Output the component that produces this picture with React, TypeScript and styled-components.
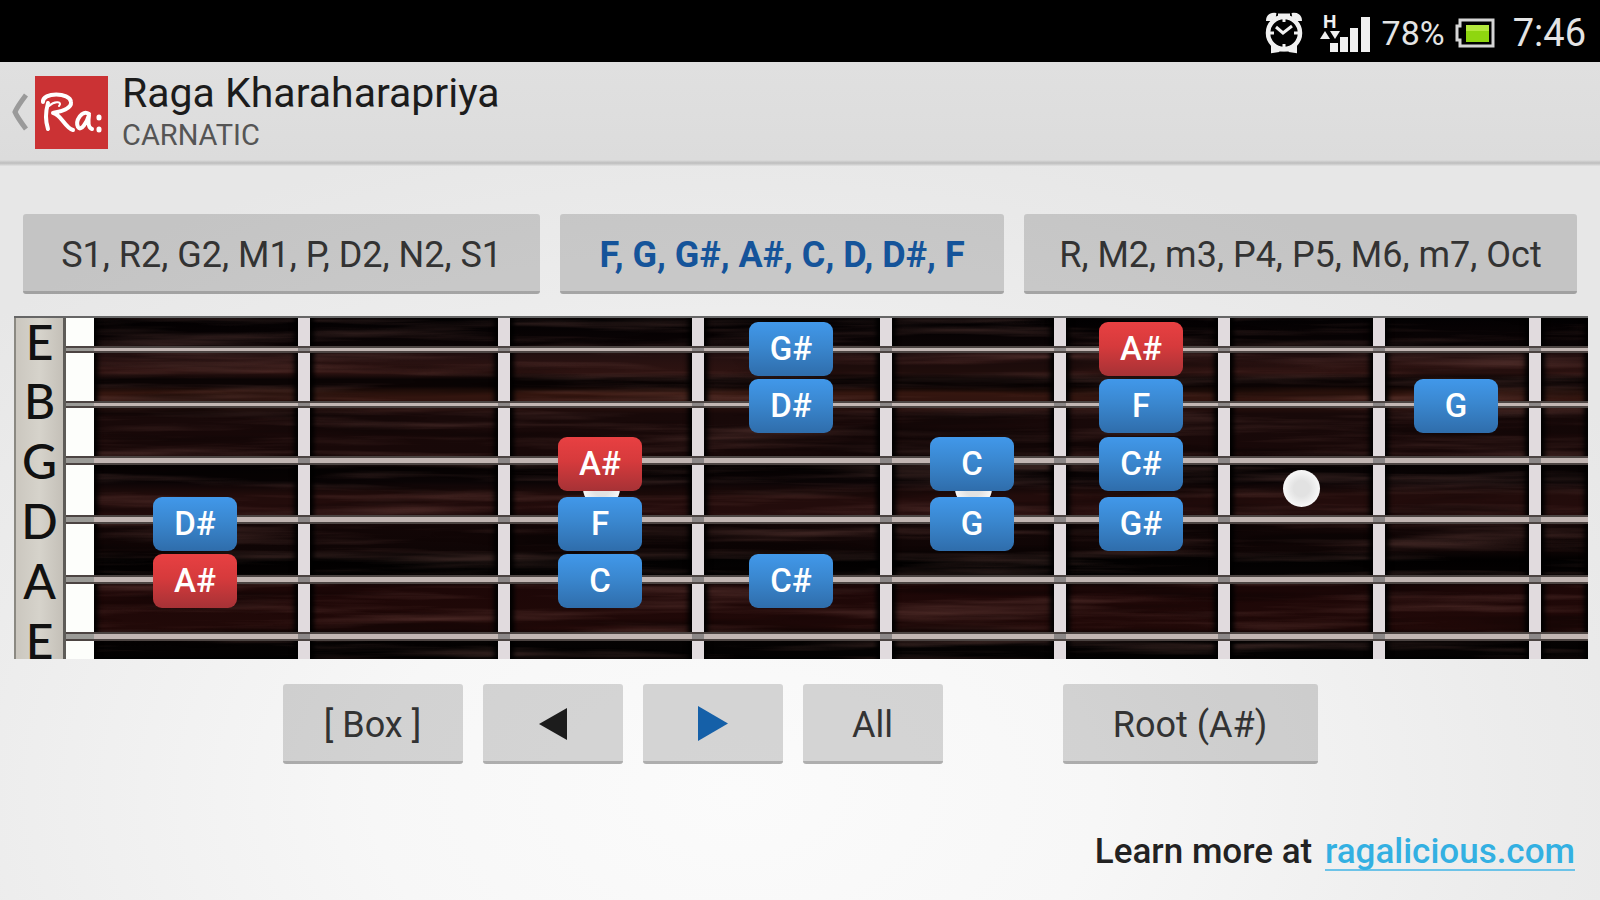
import React from "react";
import styled, { createGlobalStyle, css } from "styled-components";

const Global = createGlobalStyle`
  * { box-sizing: border-box; }
  html, body { margin: 0; }
  body { font-family: Roboto, "Liberation Sans", sans-serif; background: #e9e9e9; }
`;

const Screen = styled.div`
  min-height: 100vh;
  display: flex;
  flex-direction: column;
  color: #333;
  background: radial-gradient(ellipse 65% 75% at 46% 88%, #fbfbfb 0%, #f7f7f7 35%, #ececec 75%, #e7e7e7 100%);
`;

const StatusBar = styled.div`
  height: 62px;
  padding: 4px 14px 0 0;
  display: flex;
  align-items: center;
  justify-content: flex-end;
  background: #000;
  color: #e4e4e4;
`;

const AlarmIcon = styled.svg`
  width: 40px;
  height: 42px;
  margin-right: 16px;
`;

const SignalIcon = styled.svg`
  width: 50px;
  height: 46px;
  margin-right: 12px;
  overflow: visible;
`;

const BatteryLevel = styled.span`
  font-size: 34px;
  line-height: 40px;
`;

const BatteryIcon = styled.svg`
  width: 40px;
  height: 30px;
  margin: 0 18px 0 10px;
`;

const Time = styled.time`
  font-size: 38px;
  line-height: 40px;
`;

const Header = styled.header`
  height: 104px;
  padding: 0 12px;
  display: flex;
  align-items: center;
  background: linear-gradient(#e0e0e0, #dcdcdc 98px, #bdbdbd 101px, #e2e2e2);
`;

const BackButton = styled.button`
  display: flex;
  align-items: center;
  gap: 6px;
  padding: 0 0 4px;
  border: 0;
  background: none;
`;

const Chevron = styled.svg`
  width: 17px;
  height: 38px;
`;

const Logo = styled.svg`
  width: 73px;
  height: 73px;
  background: #cb3234;
`;

const Titles = styled.div`
  padding: 0 0 4px 14px;
`;

const Title = styled.h1`
  margin: 0;
  font-size: 41px;
  line-height: 46px;
  font-weight: 400;
  color: #1c1c1c;
`;

const Subtitle = styled.p`
  margin: 0;
  font-size: 29px;
  line-height: 38px;
  color: #555;
`;

const Main = styled.main`
  flex: 1;
  display: flex;
  flex-direction: column;
  padding-top: 48px;
`;

const Button = styled.button<{ $grow?: number; $width?: number; $active?: boolean }>`
  height: 80px;
  padding: 4px 8px 0;
  border: 0;
  border-bottom: 3px solid rgba(0, 0, 0, 0.18);
  border-radius: 3px;
  background: rgba(0, 0, 0, 0.15);
  color: #333;
  font-family: inherit;
  font-size: 36px;
  line-height: 40px;
  white-space: nowrap;
  ${(p) => p.$grow && css`flex: ${p.$grow} 1 0;`}
  ${(p) => p.$width && css`width: ${p.$width}px;`}
  ${(p) => p.$active && css`color: #15549a; font-weight: 700;`}
`;

const ScaleTabs = styled.div`
  display: flex;
  gap: 20px;
  padding: 0 23px;
`;

const Fretboard = styled.section`
  height: 343px;
  margin: 22px 12px 0 14px;
  display: grid;
  grid-template-columns: 52px 28px 1fr;
  grid-template-rows: 341px;
  overflow: hidden;
  border-top: 2px solid #666;
  background: #050202;
`;

const Tuning = styled.div`
  grid-area: 1 / 1;
  display: flex;
  flex-direction: column;
  border-left: 2px solid #8b8982;
  border-right: 3px solid #5e5c58;
  background: linear-gradient(90deg, #cbc7bf, #d6d3cb 50%, #c4c0b8);
  color: #111;
  font-family: Lato, "Liberation Sans", sans-serif;
  font-size: 48px;
  font-weight: 500;
  text-align: center;
  span { flex: 0 0 60px; line-height: 60px; }
  span:first-child { flex-basis: 53px; line-height: 48px; }
`;

const Nut = styled.div`
  grid-area: 1 / 2;
  background: #fdfefb;
`;

const Wood = styled.svg`
  grid-area: 1 / 3;
  width: 100%;
  height: 341px;
`;

const fretColumns = css`
  display: grid;
  grid-template-columns: 216fr 200fr 194fr 188fr 174fr 164fr 155fr 156fr 47fr;
`;

const Frets = styled.div`
  grid-area: 1 / 3;
  ${fretColumns}
`;

const Fret = styled.div<{ $wire: boolean }>`
  display: grid;
  place-items: center;
  box-shadow: inset 8px 0 5px -4px #000, inset -8px 0 5px -4px #000;
  ${(p) => p.$wire && css`border-right: 12px solid #e1dbde;`}
`;

const Inlay = styled.div`
  width: 37px;
  height: 37px;
  border-radius: 50%;
  background: radial-gradient(circle, #e2e2e2 30%, #f8f8f8 70%);
`;

const Strings = styled.div`
  grid-area: 1 / 2 / 2 / 4;
  display: grid;
  grid-template-rows: 55px 54px 58px 60px 60px 54px;
  align-items: center;
  padding-top: 4px;
`;

const StringLine = styled.div<{ $thick: boolean }>`
  height: ${(p) => (p.$thick ? 9 : 7)}px;
  display: grid;
  grid-template-columns: 28px 1fr;
  border: solid #4c4442;
  border-width: 2px 0;
  background: #c2b6b3;
`;

const OverNut = styled.div`
  background: #9b9b97;
`;

const Crossings = styled.div`
  ${fretColumns}
  div:not(:last-child) { border-right: 12px solid #8b8787; }
`;

const Notes = styled.div`
  grid-area: 1 / 3;
  ${fretColumns}
  grid-template-rows: 57px 58px 60px 57px 57px;
  padding-top: 4px;
  z-index: 1;
`;

const Note = styled.button<{ $fret: number; $string: number; $root?: boolean }>`
  grid-column: ${(p) => p.$fret};
  grid-row: ${(p) => p.$string};
  justify-self: center;
  width: 84px;
  height: 54px;
  margin-right: 14px;
  padding: 0;
  border: 0;
  border-radius: 9px;
  background: ${(p) => (p.$root ? "linear-gradient(#e84042, #d63a3c 45%, #a63236)" : "linear-gradient(#4198ea, #3a87cf 45%, #2f6dab)")};
  color: #fff;
  font: 500 33px/40px Roboto, "Liberation Sans", sans-serif;
`;

const Controls = styled.div`
  display: flex;
  justify-content: center;
  gap: 20px;
  margin-top: 25px;
`;

const Spacer = styled.div`
  width: 80px;
`;

const Arrow = styled.svg`
  width: 30px;
  height: 36px;
  margin-bottom: 4px;
  vertical-align: middle;
`;

const Footer = styled.footer`
  margin-top: auto;
  padding: 0 25px 28px;
  text-align: right;
  font-size: 35px;
  line-height: 40px;
  font-weight: 500;
  color: #222;
`;

const SiteLink = styled.a`
  margin-left: 4px;
  color: #33b0e2;
  text-decoration: none;
  display: inline-block;
  line-height: 34px;
  border-bottom: 2px solid #6cc3e8;
`;

const notes: { name: string; fret: number; string: number; root?: boolean }[] = [
  { name: "G#", fret: 4, string: 1 },
  { name: "A#", fret: 6, string: 1, root: true },
  { name: "D#", fret: 4, string: 2 },
  { name: "F", fret: 6, string: 2 },
  { name: "G", fret: 8, string: 2 },
  { name: "A#", fret: 3, string: 3, root: true },
  { name: "C", fret: 5, string: 3 },
  { name: "C#", fret: 6, string: 3 },
  { name: "D#", fret: 1, string: 4 },
  { name: "F", fret: 3, string: 4 },
  { name: "G", fret: 5, string: 4 },
  { name: "G#", fret: 6, string: 4 },
  { name: "A#", fret: 1, string: 5, root: true },
  { name: "C", fret: 3, string: 5 },
  { name: "C#", fret: 4, string: 5 },
];

const tuning = ["E", "B", "G", "D", "A", "E"];
const frets = [1, 2, 3, 4, 5, 6, 7, 8, 9];
const inlays = [3, 5, 7];

const woodStops: [number, string][] = [
  [0, "#030102"], [8, "#0b0405"], [11, "#241010"], [16, "#2e1311"], [18, "#0a0404"], [20, "#0c0404"],
  [22, "#34160f"], [25, "#30130f"], [28, "#180909"], [40, "#180808"], [43, "#060202"], [48, "#0a0405"],
  [52, "#220c0b"], [58, "#240c0c"], [61, "#120606"], [68, "#0f0505"], [71, "#020101"], [76, "#060303"],
  [79, "#1d0707"], [91, "#210908"], [94, "#060303"], [100, "#020101"],
];

export default function App() {
  return (
    <>
      <Global />
      <Screen>
        <StatusBar>
          <AlarmIcon viewBox="0 0 40 42" fill="none" stroke="#f0f0f0" aria-hidden="true">
            <circle cx="20" cy="21" r="16" strokeWidth="4.500" />
            <path d="M5 9 Q5 3 12 4M35 9 Q35 3 28 4" strokeWidth="6" />
            <path d="M9 33v6l6-1M31 33v6l-6-1" strokeWidth="4" />
            <path d="M14 3h12M14 38h12" strokeWidth="3" />
            <path d="M12 15 L19 21 L28 14" strokeWidth="3" />
            <path d="M20 6v4M20 32v4M5 21h5M30 21h5" strokeWidth="3" />
          </AlarmIcon>
          <SignalIcon viewBox="0 0 50 46" fill="#f0f0f0" aria-hidden="true">
            <text x="3" y="18" fontSize="19" fontWeight="700" fontFamily="Roboto">H</text>
            <path d="M0 29l5-8 5 8zM10 21h10l-5 8z" />
            <path d="M10 33h8v9h-8zM20 27h8v15h-8zM30 18h8v24h-8zM41 7h9v35h-9z" />
          </SignalIcon>
          <BatteryLevel>78%</BatteryLevel>
          <BatteryIcon viewBox="0 0 40 30" aria-hidden="true">
            <path d="M5 2h33v26H5V22H2V8h3z" fill="#000" stroke="#d5d5d5" strokeWidth="3" />
            <rect x="11" y="7" width="23" height="17" fill="#8fd60f" />
            <rect x="11" y="7" width="23" height="6" fill="#b4e83c" />
          </BatteryIcon>
          <Time>7:46</Time>
        </StatusBar>

        <Header>
          <BackButton aria-label="Back">
            <Chevron viewBox="0 0 17 38" fill="none" stroke="#9a9a9a" strokeWidth="5" aria-hidden="true">
              <path d="M14 2 Q5 14 3 19 Q5 24 14 36" />
            </Chevron>
            <Logo viewBox="0 0 73 73" fill="none" stroke="#fff" strokeWidth="4" strokeLinecap="round" strokeLinejoin="round" aria-hidden="true">
              <path d="M13 53 C10 44 11 34 13 27 M8 26 C7 16 35 16 36 26 C37 34 22 36 18 37 C26 38 30 52 38 54" />
              <path d="M14 30 C20 24 28 26 24 30" strokeWidth="2" />
              <path d="M54 38 C47 33 40 45 43 51 C46 56 52 46 54 39 C53 46 53 52 57 53" />
              <path d="M64 41v1M64 53v1" strokeWidth="5" />
            </Logo>
          </BackButton>
          <Titles>
            <Title>Raga Kharaharapriya</Title>
            <Subtitle>CARNATIC</Subtitle>
          </Titles>
        </Header>

        <Main>
          <ScaleTabs>
            <Button $grow={518}>S1, R2, G2, M1, P, D2, N2, S1</Button>
            <Button $grow={442} $active>F, G, G#, A#, C, D, D#, F</Button>
            <Button $grow={555}>R, M2, m3, P4, P5, M6, m7, Oct</Button>
          </ScaleTabs>

          <Fretboard aria-label="Fretboard">
            <Tuning>
              {tuning.map((t, i) => <span key={i}>{t}</span>)}
            </Tuning>
            <Nut />
            <Wood viewBox="0 0 1494 342" preserveAspectRatio="none" aria-hidden="true">
              <defs>
                <linearGradient id="bands" x1="0" y1="0" x2="0" y2="1">
                  {woodStops.map(([o, c]) => <stop key={o} offset={`${o}%`} stopColor={c} />)}
                </linearGradient>
                <filter id="grain" x="0" y="0" width="100%" height="100%">
                  <feTurbulence type="fractalNoise" baseFrequency="0.004 0.09" numOctaves={4} seed={7} />
                  <feColorMatrix values="0 0 0 0 0.32  0 0 0 0 0.13  0 0 0 0 0.11  2.4 0 0 0 -1.05" />
                </filter>
                <filter id="shade" x="0" y="0" width="100%" height="100%">
                  <feTurbulence type="fractalNoise" baseFrequency="0.003 0.05" numOctaves={3} seed={21} />
                  <feColorMatrix values="0 0 0 0 0  0 0 0 0 0  0 0 0 0 0  5 0 0 0 -2.5" />
                </filter>
              </defs>
              <rect width="1494" height="342" fill="url(#bands)" />
              <rect width="1494" height="342" filter="url(#grain)" opacity="0.3" />
              <rect width="1494" height="342" filter="url(#shade)" opacity="0.3" />
            </Wood>
            <Frets>
              {frets.map((f) => (
                <Fret key={f} $wire={f < 9}>{inlays.includes(f) && <Inlay />}</Fret>
              ))}
            </Frets>
            <Strings>
              {tuning.map((_, i) => (
                <StringLine key={i} $thick={i > 1}>
                  <OverNut />
                  <Crossings>{frets.map((f) => <div key={f} />)}</Crossings>
                </StringLine>
              ))}
            </Strings>
            <Notes>
              {notes.map((n) => (
                <Note key={`${n.fret}-${n.string}`} $fret={n.fret} $string={n.string} $root={n.root}>{n.name}</Note>
              ))}
            </Notes>
          </Fretboard>

          <Controls>
            <Button $width={180}>[ Box ]</Button>
            <Button $width={140} aria-label="Previous position">
              <Arrow viewBox="0 0 30 36" fill="#1c1c1c"><path d="M29 2v32L1 18z" /></Arrow>
            </Button>
            <Button $width={140} aria-label="Next position">
              <Arrow viewBox="0 0 30 36" fill="#1560a8"><path d="M0 0v35L30 17.500z" /></Arrow>
            </Button>
            <Button $width={140}>All</Button>
            <Spacer />
            <Button $width={255}>Root (A#)</Button>
          </Controls>

          <Footer>
            Learn more at <SiteLink href="#ragalicious">ragalicious.com</SiteLink>
          </Footer>
        </Main>
      </Screen>
    </>
  );
}
